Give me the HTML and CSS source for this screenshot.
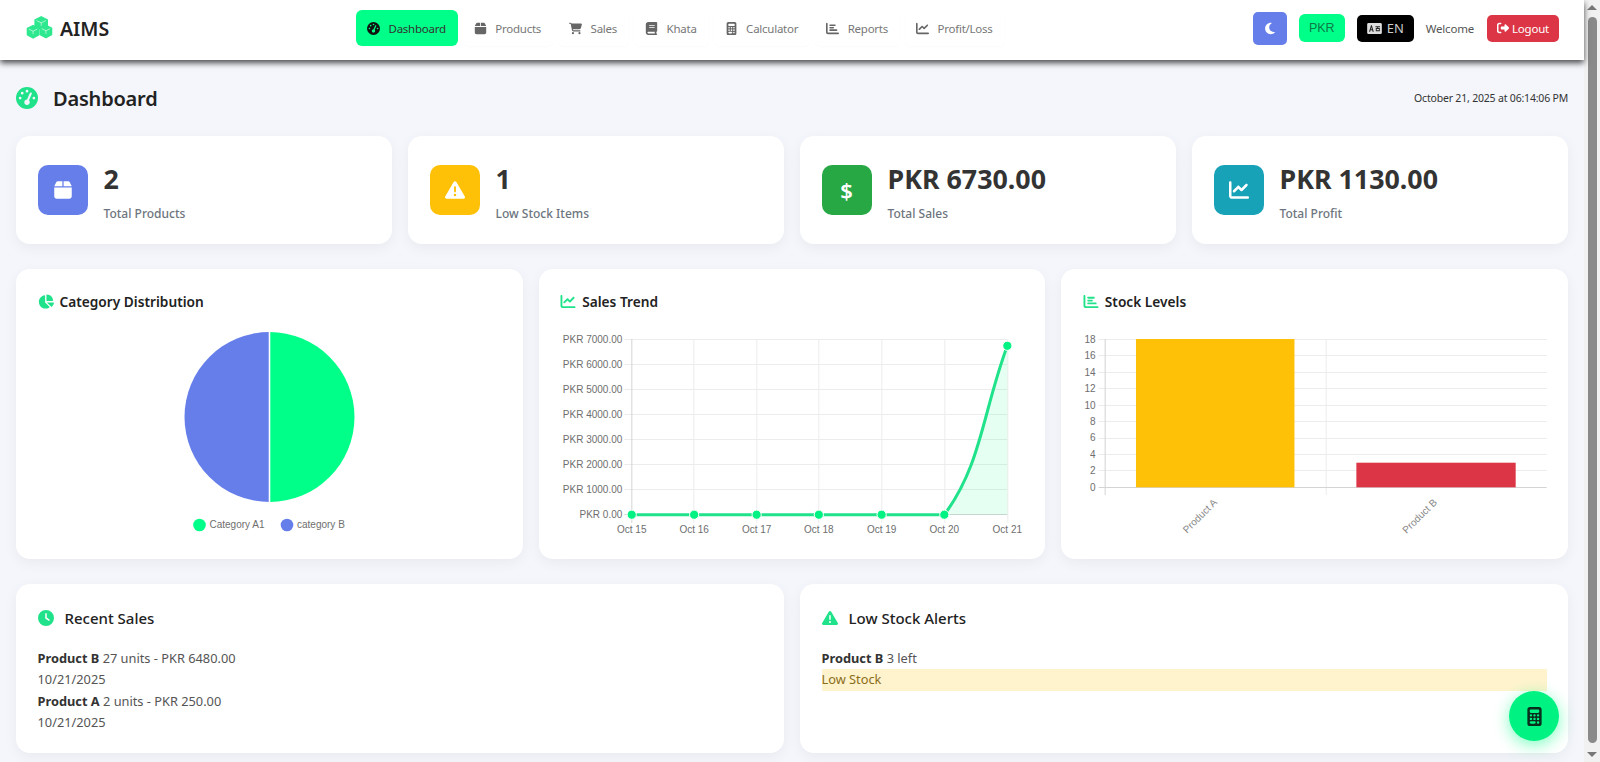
FILE: index.html
```html
<!DOCTYPE html>
<html lang="en">
<head>
    <meta charset="UTF-8">
    <meta name="viewport" content="width=device-width, initial-scale=1.0">
    <title>AIMS - Dashboard</title>
    <link rel="stylesheet" href="styles.css">
</head>
<body>

    <!-- icon set -->
    <svg class="icon-defs" xmlns="http://www.w3.org/2000/svg">
        <symbol id="i-gauge" viewBox="0 0 512 512"><path d="M0 256a256 256 0 1 1 512 0A256 256 0 1 1 0 256zM288 96a32 32 0 1 0 -64 0 32 32 0 1 0 64 0zM256 416c35.3 0 64-28.7 64-64c0-17.4-6.9-33.1-18.1-44.6L366 161.7c5.3-12.1-.2-26.3-12.3-31.6s-26.3 .2-31.6 12.3L257.9 288c-.6 0-1.3 0-1.9 0c-35.3 0-64 28.7-64 64s28.7 64 64 64zM176 144a32 32 0 1 0 -64 0 32 32 0 1 0 64 0zM96 288a32 32 0 1 0 0-64 32 32 0 1 0 0 64zm352-32a32 32 0 1 0 -64 0 32 32 0 1 0 64 0z"/></symbol>
        <symbol id="i-box" viewBox="0 0 448 512"><path d="M50.7 58.5L0 160H208V32H93.7C75.5 32 58.9 42.3 50.7 58.5zM240 160H448L397.3 58.5C389.1 42.3 372.5 32 354.3 32H240V160zm208 32H0V416c0 35.3 28.7 64 64 64H384c35.3 0 64-28.7 64-64V192z"/></symbol>
        <symbol id="i-cart" viewBox="0 0 576 512"><path d="M0 24C0 10.7 10.7 0 24 0H69.5c22 0 41.5 12.8 50.6 32h411c26.3 0 45.5 25 38.6 50.4l-41 152.3c-8.5 31.4-37 53.3-69.5 53.3H170.7l5.4 28.5c2.2 11.3 12.1 19.5 23.6 19.5H488c13.3 0 24 10.7 24 24s-10.7 24-24 24H199.7c-34.6 0-64.3-24.6-70.7-58.5L77.4 54.5c-.7-3.8-4-6.5-7.9-6.5H24C10.7 48 0 37.3 0 24zM128 464a48 48 0 1 1 96 0 48 48 0 1 1 -96 0zm336-48a48 48 0 1 1 0 96 48 48 0 1 1 0-96z"/></symbol>
        <symbol id="i-book" viewBox="0 0 448 512"><path d="M96 0C43 0 0 43 0 96V416c0 53 43 96 96 96H384h32c17.7 0 32-14.3 32-32s-14.3-32-32-32V384c17.7 0 32-14.3 32-32V32c0-17.7-14.3-32-32-32H384 96zm0 384H352v64H96c-17.7 0-32-14.3-32-32s14.3-32 32-32zm32-240c0-8.8 7.2-16 16-16H336c8.8 0 16 7.2 16 16s-7.2 16-16 16H144c-8.8 0-16-7.2-16-16zm16 48H336c8.8 0 16 7.2 16 16s-7.2 16-16 16H144c-8.8 0-16-7.2-16-16s7.2-16 16-16z"/></symbol>
        <symbol id="i-calc" viewBox="0 0 384 512"><path d="M64 0C28.7 0 0 28.7 0 64V448c0 35.3 28.7 64 64 64H320c35.3 0 64-28.7 64-64V64c0-35.3-28.7-64-64-64H64zM96 64H288c17.7 0 32 14.3 32 32v32c0 17.7-14.3 32-32 32H96c-17.7 0-32-14.3-32-32V96c0-17.7 14.3-32 32-32zm32 160a32 32 0 1 1 -64 0 32 32 0 1 1 64 0zM96 352a32 32 0 1 1 0-64 32 32 0 1 1 0 64zM64 416c0-17.7 14.3-32 32-32h96c17.7 0 32 14.3 32 32s-14.3 32-32 32H96c-17.7 0-32-14.3-32-32zM192 256a32 32 0 1 1 0-64 32 32 0 1 1 0 64zm32 64a32 32 0 1 1 -64 0 32 32 0 1 1 64 0zm64-64a32 32 0 1 1 0-64 32 32 0 1 1 0 64zm32 64a32 32 0 1 1 -64 0 32 32 0 1 1 64 0zM288 448a32 32 0 1 1 0-64 32 32 0 1 1 0 64z"/></symbol>
        <symbol id="i-bars" viewBox="0 0 512 512"><path d="M32 32c17.7 0 32 14.3 32 32V400c0 8.8 7.2 16 16 16H480c17.7 0 32 14.3 32 32s-14.3 32-32 32H80c-44.2 0-80-35.8-80-80V64C0 46.3 14.3 32 32 32zm96 96c0-17.7 14.3-32 32-32l192 0c17.7 0 32 14.3 32 32s-14.3 32-32 32l-192 0c-17.7 0-32-14.3-32-32zm32 64H288c17.7 0 32 14.3 32 32s-14.3 32-32 32H160c-17.7 0-32-14.3-32-32s14.3-32 32-32zm0 96H416c17.7 0 32 14.3 32 32s-14.3 32-32 32H160c-17.7 0-32-14.3-32-32s14.3-32 32-32z"/></symbol>
        <symbol id="i-line" viewBox="0 0 512 512"><path d="M64 64c0-17.7-14.3-32-32-32S0 46.3 0 64V400c0 44.2 35.8 80 80 80H480c17.7 0 32-14.3 32-32s-14.3-32-32-32H80c-8.8 0-16-7.2-16-16V64zm406.6 86.6c12.5-12.5 12.5-32.8 0-45.3s-32.8-12.5-45.3 0L320 210.7l-57.4-57.4c-12.5-12.5-32.8-12.5-45.3 0l-112 112c-12.5 12.5-12.5 32.8 0 45.3s32.8 12.5 45.3 0L240 221.3l57.4 57.4c12.5 12.5 32.8 12.5 45.3 0l128-128z"/></symbol>
        <symbol id="i-moon" viewBox="0 0 384 512"><path d="M223.5 32C100 32 0 132.3 0 256S100 480 223.5 480c60.6 0 115.5-24.2 155.8-63.4c5-4.9 6.3-12.5 3.1-18.7s-10.1-9.7-17-8.5c-9.8 1.7-19.8 2.6-30.1 2.6c-96.9 0-175.5-78.8-175.5-176c0-65.8 36-123.1 89.3-153.3c6.1-3.5 9.2-10.5 7.7-17.3s-7.3-11.9-14.3-12.5c-6.3-.5-12.6-.8-19-.8z"/></symbol>
        <symbol id="i-logout" viewBox="0 0 512 512"><path d="M377.9 105.9L500.7 228.7c7.2 7.2 11.3 17.1 11.3 27.3s-4.1 20.1-11.3 27.3L377.9 406.1c-6.4 6.4-15 9.9-24 9.9c-18.7 0-33.9-15.2-33.9-33.9l0-62.1-128 0c-17.7 0-32-14.3-32-32l0-64c0-17.7 14.3-32 32-32l128 0 0-62.1c0-18.7 15.2-33.9 33.9-33.9c9 0 17.6 3.6 24 9.9zM160 96L96 96c-17.7 0-32 14.3-32 32l0 256c0 17.7 14.3 32 32 32l64 0c17.7 0 32 14.3 32 32s-14.3 32-32 32l-64 0c-53 0-96-43-96-96L0 128C0 75 43 32 96 32l64 0c17.7 0 32 14.3 32 32s-14.3 32-32 32z"/></symbol>
        <symbol id="i-warn" viewBox="0 0 512 512"><path d="M256 32c14.2 0 27.3 7.5 34.5 19.8l216 368c7.3 12.4 7.3 27.7 .2 40.1S486.3 480 472 480H40c-14.3 0-27.6-7.7-34.7-20.1s-7-27.8 .2-40.1l216-368C228.7 39.5 241.8 32 256 32zm0 128c-13.3 0-24 10.7-24 24V296c0 13.3 10.7 24 24 24s24-10.7 24-24V184c0-13.3-10.7-24-24-24zm32 224a32 32 0 1 0 -64 0 32 32 0 1 0 64 0z"/></symbol>
        <symbol id="i-clock" viewBox="0 0 512 512"><path d="M256 0a256 256 0 1 1 0 512A256 256 0 1 1 256 0zM232 120V256c0 8 4 15.5 10.7 20l96 64c11 7.4 25.9 4.4 33.3-6.7s4.4-25.9-6.7-33.3L280 243.2V120c0-13.3-10.7-24-24-24s-24 10.7-24 24z"/></symbol>
        <symbol id="i-pie" viewBox="0 0 576 512"><path d="M304 240V16.6c0-9 7-16.6 16-16.6C443.7 0 544 100.3 544 224c0 9-7.6 16-16.6 16H304zM32 272C32 150.7 122.1 50.3 239 34.3c9.2-1.3 17 6.1 17 15.4V288L412.5 444.5c6.7 6.7 6.2 17.7-1.5 23.1C371.8 495.6 323.8 512 272 512C139.5 512 32 404.6 32 272zm526.4 16c9.3 0 16.6 7.8 15.4 17c-7.7 55.9-34.6 105.6-73.9 142.3c-6 5.6-15.4 5.2-21.2-.7L320 288H558.4z"/></symbol>
        <symbol id="i-cubes" viewBox="0 0 34 30">
            <g fill="#2ee88f" stroke="#2ee88f" stroke-width="2" stroke-linejoin="round">
                <path d="M19 2l7 3.500 0 7.500-7 3.500-7-3.500 0-7.500z"/>
                <path d="M9.500 12.500l6.500 3.200 0 7.300-6.500 3.500-6.500-3.500 0-7.300z"/>
                <path d="M24.500 12l6.500 3.200 0 7.300-6.500 3.500-6.500-3.500 0-7.300z"/>
            </g>
            <g fill="none" stroke="#b8f8d8" stroke-width="1" stroke-linecap="round" stroke-linejoin="round">
                <path d="M14 6.500l5 2.500 5-2.500M19 9v3"/>
                <path d="M5 16.500l4.500 2.300 4.500-2.300M9.500 18.800v3"/>
                <path d="M20 16l4.500 2.300 4.500-2.300M24.500 18.300v3"/>
            </g>
        </symbol>
    </svg>

    <div class="window">
        <div class="page">

            <nav class="navbar">
                <a class="brand">
                    <svg class="brand-icon"><use href="#i-cubes"/></svg>
                    <span>AIMS</span>
                </a>

                <ul class="nav-links">
                    <li class="nav-item active"><svg class="nav-icon"><use href="#i-gauge"/></svg>Dashboard</li>
                    <li class="nav-item"><svg class="nav-icon"><use href="#i-box"/></svg>Products</li>
                    <li class="nav-item"><svg class="nav-icon"><use href="#i-cart"/></svg>Sales</li>
                    <li class="nav-item"><svg class="nav-icon"><use href="#i-book"/></svg>Khata</li>
                    <li class="nav-item"><svg class="nav-icon"><use href="#i-calc"/></svg>Calculator</li>
                    <li class="nav-item"><svg class="nav-icon"><use href="#i-bars"/></svg>Reports</li>
                    <li class="nav-item"><svg class="nav-icon"><use href="#i-line"/></svg>Profit/Loss</li>
                </ul>

                <div class="nav-right">
                    <button class="theme-btn"><svg class="theme-icon"><use href="#i-moon"/></svg></button>
                    <button class="currency-btn">PKR</button>
                    <button class="lang-btn">
                        <svg class="lang-icon" viewBox="0 0 16 12">
                            <rect width="16" height="12" rx="1.500" fill="#dedede"/>
                            <path d="M2 9.500L4.200 2.500h.9L7.200 9.500H5.900L5.500 8H3.700l-.4 1.500zM4 6.900h1.200L4.600 4.600z" fill="#222"/>
                            <path d="M9 3.500h5v1h-2v1h1.800v3.500H9.400V5.500h1.600v-1H9zM10.400 6.500v1.500h2.400V6.500z" fill="#222"/>
                        </svg>EN
                    </button>
                    <span class="welcome">Welcome</span>
                    <button class="logout-btn"><svg class="logout-icon"><use href="#i-logout"/></svg>Logout</button>
                </div>
            </nav>

            <main class="content">
                <div class="page-head">
                    <h1><svg class="head-icon"><use href="#i-gauge"/></svg>Dashboard</h1>
                    <span class="timestamp">October 21, 2025 at 06:14:06 PM</span>
                </div>

                <section class="stats">
                    <div class="card stat-card">
                        <div class="stat-icon blue"><svg class="stat-glyph"><use href="#i-box"/></svg></div>
                        <div class="stat-text">
                            <div class="stat-value">2</div>
                            <div class="stat-label">Total Products</div>
                        </div>
                    </div>
                    <div class="card stat-card">
                        <div class="stat-icon yellow"><svg class="stat-glyph"><use href="#i-warn"/></svg></div>
                        <div class="stat-text">
                            <div class="stat-value">1</div>
                            <div class="stat-label">Low Stock Items</div>
                        </div>
                    </div>
                    <div class="card stat-card">
                        <div class="stat-icon green"><span class="dollar">$</span></div>
                        <div class="stat-text">
                            <div class="stat-value">PKR 6730.00</div>
                            <div class="stat-label">Total Sales</div>
                        </div>
                    </div>
                    <div class="card stat-card">
                        <div class="stat-icon teal"><svg class="stat-glyph"><use href="#i-line"/></svg></div>
                        <div class="stat-text">
                            <div class="stat-value">PKR 1130.00</div>
                            <div class="stat-label">Total Profit</div>
                        </div>
                    </div>
                </section>

                <section class="charts">
                    <div class="card chart-card">
                        <h5 class="card-title"><svg class="title-icon"><use href="#i-pie"/></svg>Category Distribution</h5>
                        <svg class="chart" viewBox="37 320 464 225">
                            <path d="M269.500 332a85 85 0 0 1 0 170z" fill="#00ff88"/>
                            <path d="M269.500 332a85 85 0 0 0 0 170z" fill="#667eea"/>
                            <path d="M269.500 331v172" stroke="#fff" stroke-width="1.600"/>
                            <circle cx="199.500" cy="525" r="6.300" fill="#00ff88"/>
                            <text class="tick" x="209.500" y="527.500">Category A1</text>
                            <circle cx="287" cy="525" r="6.300" fill="#667eea"/>
                            <text class="tick" x="297" y="527.500">category B</text>
                        </svg>
                    </div>

                    <div class="card chart-card">
                        <h5 class="card-title"><svg class="title-icon"><use href="#i-line"/></svg>Sales Trend</h5>
                        <svg class="chart" viewBox="559.670 320 464 225">
                            <g class="grid">
                                <path d="M624 339.500H1007M624 364.500H1007M624 389.500H1007M624 414.500H1007M624 439.500H1007M624 464.500H1007M624 489.500H1007"/>
                                <path d="M693.500 339V523M756.500 339V523M818.500 339V523M881.500 339V523M944.500 339V523M1007.500 339V523"/>
                                <path class="axis" d="M631.500 339V523M624 514.500H1007"/>
                            </g>
                            <path d="M944 514.700C981.200 464.500 982 413.400 1007 345.800V514.700z" fill="#00ff88" fill-opacity=".1"/>
                            <path d="M631.400 514.700H944C981.200 464.500 982 413.400 1007 345.800" fill="none" stroke="#1fe28a" stroke-width="3"/>
                            <g class="points">
                                <circle cx="631.400" cy="514.700" r="4.600"/><circle cx="693.800" cy="514.700" r="4.600"/>
                                <circle cx="756.300" cy="514.700" r="4.600"/><circle cx="818.500" cy="514.700" r="4.600"/>
                                <circle cx="881.300" cy="514.700" r="4.600"/><circle cx="944" cy="514.700" r="4.600"/>
                                <circle cx="1007" cy="345.800" r="4.600"/>
                            </g>
                            <g class="tick end">
                                <text x="622" y="342.500">PKR 7000.00</text><text x="622" y="367.500">PKR 6000.00</text>
                                <text x="622" y="392.500">PKR 5000.00</text><text x="622" y="417.500">PKR 4000.00</text>
                                <text x="622" y="442.500">PKR 3000.00</text><text x="622" y="468">PKR 2000.00</text>
                                <text x="622" y="493">PKR 1000.00</text><text x="622" y="518">PKR 0.00</text>
                            </g>
                            <g class="tick middle">
                                <text x="631.400" y="532.500">Oct 15</text><text x="693.800" y="532.500">Oct 16</text>
                                <text x="756.300" y="532.500">Oct 17</text><text x="818.500" y="532.500">Oct 18</text>
                                <text x="881.300" y="532.500">Oct 19</text><text x="944" y="532.500">Oct 20</text>
                                <text x="1007" y="532.500">Oct 21</text>
                            </g>
                        </svg>
                    </div>

                    <div class="card chart-card">
                        <h5 class="card-title"><svg class="title-icon"><use href="#i-bars"/></svg>Stock Levels</h5>
                        <svg class="chart" viewBox="1082.330 320 464 225">
                            <g class="grid">
                                <path d="M1099 339.500H1547M1099 355.500H1547M1099 372.500H1547M1099 388.500H1547M1099 405.500H1547M1099 421.500H1547M1099 438.500H1547M1099 454.500H1547M1099 470.500H1547"/>
                                <path d="M1326.500 339V495"/>
                                <path class="axis" d="M1105.500 339V495M1099 487.500H1547"/>
                            </g>
                            <rect x="1136.300" y="339" width="158.500" height="148.300" fill="#ffc107"/>
                            <rect x="1356.700" y="462.700" width="159.300" height="24.600" fill="#dc3545"/>
                            <g class="tick end">
                                <text x="1096" y="342.500">18</text><text x="1096" y="358.500">16</text>
                                <text x="1096" y="375.500">14</text><text x="1096" y="391.500">12</text>
                                <text x="1096" y="408.500">10</text><text x="1096" y="424.500">8</text>
                                <text x="1096" y="440.500">6</text><text x="1096" y="457.500">4</text>
                                <text x="1096" y="474">2</text><text x="1096" y="490.500">0</text>
                                <text class="slanted" transform="rotate(-45 1218 503)" x="1218" y="503">Product A</text>
                                <text class="slanted" transform="rotate(-45 1438 503)" x="1438" y="503">Product B</text>
                            </g>
                        </svg>
                    </div>
                </section>

                <section class="lists">
                    <div class="card list-card">
                        <h5 class="list-title"><svg class="list-icon"><use href="#i-clock"/></svg>Recent Sales</h5>
                        <div class="list-row"><strong>Product B</strong> 27 units - PKR 6480.00</div>
                        <div class="list-row">10/21/2025</div>
                        <div class="list-row"><strong>Product A</strong> 2 units - PKR 250.00</div>
                        <div class="list-row">10/21/2025</div>
                    </div>
                    <div class="card list-card">
                        <h5 class="list-title"><svg class="list-icon"><use href="#i-warn"/></svg>Low Stock Alerts</h5>
                        <div class="list-row"><strong>Product B</strong> 3 left</div>
                        <div class="list-row low-badge">Low Stock</div>
                    </div>
                </section>
            </main>
        </div>

        <!-- scrollbar of the page -->
        <div class="scrollbar">
            <span class="arrow-up"></span>
            <span class="thumb"></span>
            <span class="arrow-down"></span>
        </div>

        <button class="calc-fab"><svg class="fab-icon"><use href="#i-calc"/></svg></button>
    </div>

</body>
</html>
```

FILE: styles.css
```css
* {
    box-sizing: border-box;
}

html, body {
    margin: 0;
    padding: 0;
    height: 100%;
    overflow: hidden;
}

body {
    font-family: "Noto Sans", "Open Sans", sans-serif;
    background-color: #f4f6fb;
    color: #333;
}

.icon-defs {
    display: none;
}

.window {
    display: flex;
    height: 762px;
}

.page {
    flex: 1;
    min-width: 0;
}

/* navbar */
.navbar {
    display: flex;
    align-items: center;
    height: 60px;
    padding: 0 25px 4px;
    background-color: #fff;
    box-shadow: 0 3px 6px rgba(0, 0, 0, 0.7);
    position: relative;
}

.brand {
    display: flex;
    align-items: center;
    gap: 6px;
    width: 331px;
    font-size: 19.5px;
    font-weight: 600;
    color: #222;
}

.brand-icon {
    width: 29px;
    height: 26px;
}

.nav-links {
    display: flex;
    gap: 5px;
    list-style: none;
    margin: 0;
    padding: 0;
}

.nav-item {
    display: flex;
    align-items: center;
    height: 36px;
    padding: 0 12px 0 11px;
    border-radius: 6px;
    font-size: 11.5px;
    letter-spacing: -0.25px;
    color: #777;
    box-shadow: 0 1px 2px rgba(0, 0, 0, 0.02);
}

.nav-item.active {
    background-color: #00ff88;
    color: #333;
}

.nav-icon {
    width: 13px;
    height: 13px;
    margin-right: 8.5px;
    fill: #666;
}

.active .nav-icon {
    fill: #111;
}

.nav-right {
    display: flex;
    align-items: center;
    margin-left: auto;
}

.nav-right button {
    border: none;
    font-family: inherit;
    padding: 0;
    display: flex;
    align-items: center;
    justify-content: center;
}

.theme-btn {
    width: 34px;
    height: 33px;
    border-radius: 5px;
    background-color: #667eea;
    margin-right: 12px;
}

.theme-icon {
    width: 10px;
    height: 13px;
    fill: #fff;
}

.nav-right .currency-btn {
    width: 46px;
    height: 28px;
    border-radius: 6px;
    background-color: #00ff88;
    color: #0b7a48;
    font-family: "Liberation Sans", Arial, sans-serif;
    font-size: 12.5px;
    margin-right: 12px;
}

.lang-btn {
    width: 57px;
    height: 27px;
    border-radius: 5px;
    background-color: #000;
    color: #ccc;
    font-size: 13px;
    margin-right: 12px;
}

.lang-icon {
    width: 15px;
    height: 11px;
    margin-right: 5px;
}

.welcome {
    font-size: 11.5px;
    letter-spacing: -0.2px;
    color: #555;
    margin-right: 13px;
}

.logout-btn {
    width: 72px;
    height: 27px;
    border-radius: 5px;
    background-color: #dc3545;
    color: #fff;
    font-size: 11.5px;
    letter-spacing: -0.2px;
}

.logout-icon {
    width: 12px;
    height: 12px;
    fill: #fff;
    margin-right: 3px;
}

/* main area */
.content {
    padding: 16px;
}

.page-head {
    display: flex;
    align-items: center;
    justify-content: space-between;
    height: 44px;
    margin-bottom: 16px;
}

.page-head h1 {
    display: flex;
    align-items: center;
    margin: 0;
    font-size: 20px;
    font-weight: 600;
    letter-spacing: -0.2px;
    color: #222;
}

.head-icon {
    width: 22px;
    height: 22px;
    margin-right: 15px;
    fill: #1fe28a;
}

.timestamp {
    font-size: 10.5px;
    letter-spacing: -0.19px;
    color: #333;
}

.card {
    background-color: #fff;
    border-radius: 14px;
    box-shadow: 0 4px 14px rgba(0, 0, 0, 0.05);
}

.stats {
    display: grid;
    grid-template-columns: repeat(4, 1fr);
    gap: 16px;
    margin-bottom: 25px;
}

.stat-card {
    display: flex;
    align-items: center;
    gap: 16px;
    height: 108px;
    padding: 0 21.5px;
}

.stat-text {
    padding-top: 4px;
}

.stat-icon {
    display: flex;
    align-items: center;
    justify-content: center;
    width: 50px;
    height: 50px;
    border-radius: 10px;
}

.blue { background-color: #667eea; }
.yellow { background-color: #ffc107; }
.green { background-color: #28a745; }
.teal { background-color: #17a2b8; }

.stat-glyph {
    width: 20px;
    height: 20px;
    fill: #fff;
}

.dollar {
    font-size: 22px;
    font-weight: 600;
    color: #fff;
}

.stat-value {
    font-size: 26.8px;
    font-weight: 700;
    line-height: 36px;
    margin-bottom: 8px;
}

.stat-label {
    font-size: 12px;
    font-weight: 500;
    line-height: 18px;
    color: #6c757d;
}

.charts {
    display: grid;
    grid-template-columns: repeat(3, 1fr);
    gap: 16px;
    margin-bottom: 25px;
}

.chart-card {
    height: 290px;
    padding: 21px;
}

.card-title {
    display: flex;
    align-items: center;
    height: 22px;
    margin: 0 0 8px 0.5px;
    font-size: 13.7px;
    font-weight: 600;
    color: #222;
}

.title-icon {
    width: 16px;
    height: 15px;
    margin-right: 6px;
    fill: #1fe28a;
}

.chart {
    display: block;
    width: 464px;
    height: 225px;
    overflow: visible;
}

.tick {
    font-family: "Liberation Sans", Arial, sans-serif;
    font-size: 10px;
    fill: #6e6e6e;
}

.end {
    text-anchor: end;
}

.middle {
    text-anchor: middle;
}

.slanted {
    fill: #888;
}

.grid path {
    fill: none;
    stroke: #ececec;
    stroke-width: 1;
}

.grid .axis {
    stroke: #d4d4d4;
}

.points circle {
    fill: #00f282;
    stroke: #fff;
    stroke-width: 1;
}

.lists {
    display: grid;
    grid-template-columns: 1fr 1fr;
    gap: 16px;
}

.list-card {
    height: 169px;
    padding: 21px 21.5px;
}

.list-title {
    display: flex;
    align-items: center;
    height: 26px;
    margin: 0 0 17px;
    font-size: 15px;
    font-weight: 500;
    color: #222;
}

.list-icon {
    width: 16px;
    height: 16px;
    margin-right: 11px;
    fill: #1fe28a;
}

.list-row {
    font-size: 12.8px;
    line-height: 21.3px;
    color: #555;
}

.list-row strong {
    font-weight: 700;
    color: #333;
}

.low-badge {
    background-color: #fff3cd;
    color: #8a6d1a;
}

/* scrollbar */
.scrollbar {
    display: flex;
    flex-direction: column;
    align-items: center;
    width: 16px;
    height: 762px;
    padding-top: 5px;
    background-color: #f1f1f1;
}

.arrow-up, .arrow-down {
    width: 0;
    height: 0;
    border-left: 5px solid transparent;
    border-right: 5px solid transparent;
}

.arrow-up {
    border-bottom: 5px solid #777;
}

.arrow-down {
    border-top: 5px solid #777;
}

.thumb {
    width: 9px;
    height: 726px;
    margin: 7px 0 9px;
    border-radius: 5px;
    background-color: #8a8a8a;
}

.calc-fab {
    position: fixed;
    left: 1509px;
    top: 691px;
    width: 50px;
    height: 50px;
    border: none;
    border-radius: 50%;
    background-color: #00f282;
    box-shadow: 0 4px 16px rgba(0, 255, 136, 0.5);
    display: flex;
    align-items: center;
    justify-content: center;
}

.fab-icon {
    width: 15px;
    height: 19px;
    fill: #0a2e1e;
}
```
